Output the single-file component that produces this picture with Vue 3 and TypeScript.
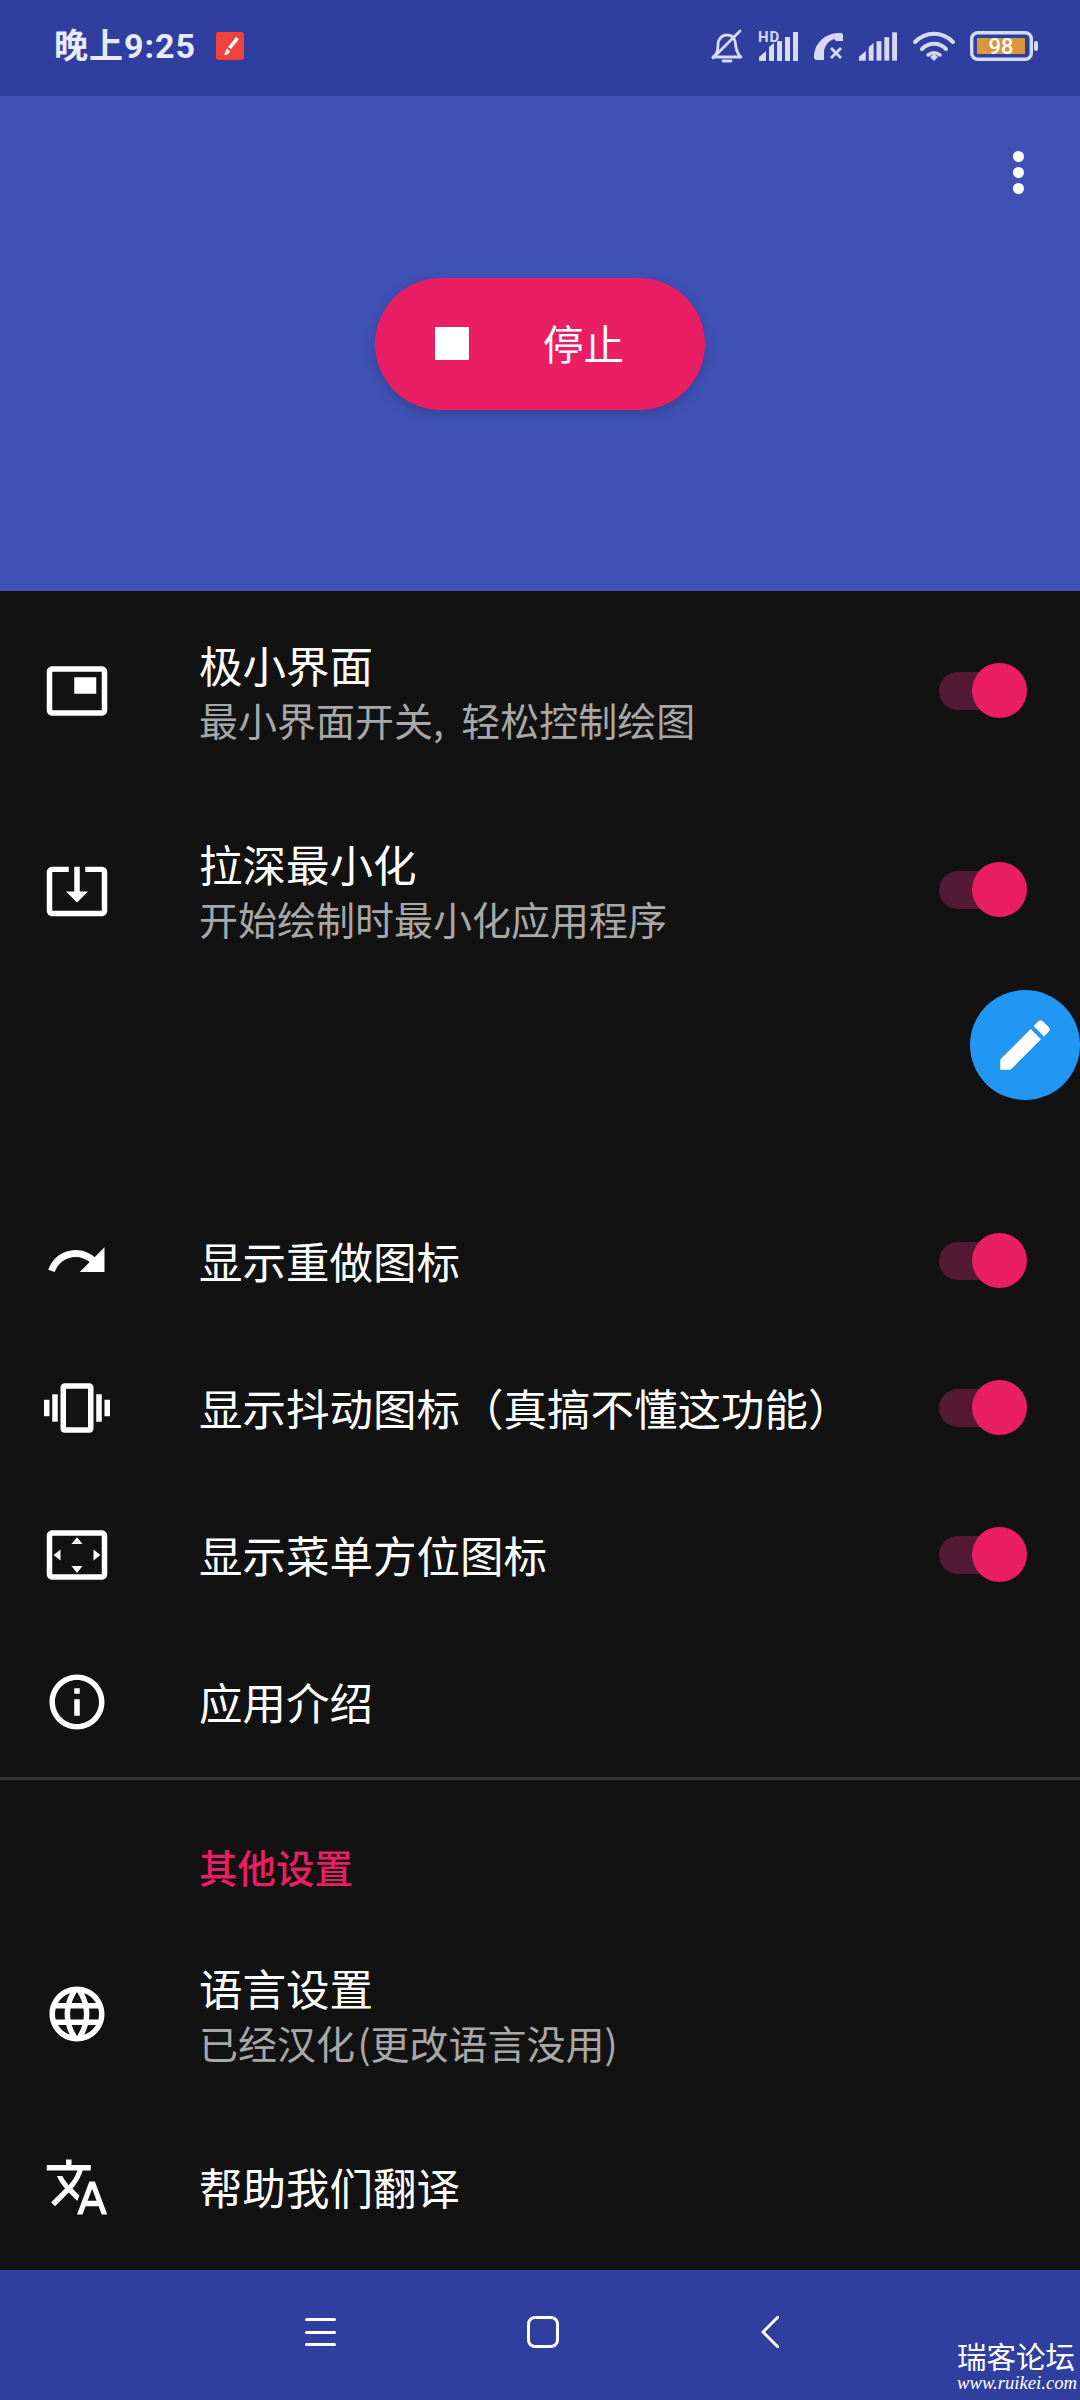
<script setup lang="ts">
type Row = {
  icon: string;
  title: string;
  sub?: string;
  toggle?: boolean;
};

const icons = {
  pip: 'M19 7h-8v6h8V7zm2-4H3c-1.1 0-2 .9-2 2v14c0 1.1.9 2 2 2h18c1.1 0 2-.9 2-2V5c0-1.1-.9-2-2-2zm0 16.01H3V4.98h18v14.03z',
  minimize: 'M12 16.5l4-4h-3v-9h-2v9H8l4 4zm9-13h-6v1.99h6v14.03H3V5.49h6V3.5H3c-1.1 0-2 .9-2 2v14c0 1.1.9 2 2 2h18c1.1 0 2-.9 2-2v-14c0-1.1-.9-2-2-2z',
  redo: 'M18.4 10.6C16.55 8.99 14.15 8 11.5 8c-4.65 0-8.58 3.03-9.96 7.22L3.9 16c1.05-3.19 4.05-5.5 7.6-5.5 1.95 0 3.73.72 5.12 1.88L13 16h9V7l-3.6 3.6z',
  vibrate: 'M0 15h2V9H0v6zm3 2h2V7H3v10zm19-8v6h2V9h-2zm-3 8h2V7h-2v10zM16.5 3h-9C6.67 3 6 3.67 6 4.5v15c0 .83.67 1.5 1.5 1.5h9c.83 0 1.5-.67 1.5-1.5v-15c0-.83-.67-1.5-1.5-1.5zM16 19H8V5h8v14z',
  overscan: 'M12.01 5.5L10 8h4l-1.99-2.5zM18 10v4l2.5-1.99L18 10zM6 10l-2.5 2.01L6 14v-4zm8 6h-4l2.01 2.5L14 16zm7-13H3c-1.1 0-2 .9-2 2v14c0 1.1.9 2 2 2h18c1.1 0 2-.9 2-2V5c0-1.1-.9-2-2-2zm0 16.01H3V4.99h18v14.02z',
  info: 'M11 17h2v-6h-2v6zm1-15C6.48 2 2 6.48 2 12s4.48 10 10 10 10-4.48 10-10S17.52 2 12 2zm0 18c-4.41 0-8-3.59-8-8s3.59-8 8-8 8 3.59 8 8-3.59 8-8 8zM11 9h2V7h-2v2z',
  language: 'M11.99 2C6.47 2 2 6.48 2 12s4.47 10 9.99 10C17.52 22 22 17.52 22 12S17.52 2 11.99 2zm6.93 6h-2.95c-.32-1.25-.78-2.45-1.38-3.56 1.84.63 3.37 1.91 4.33 3.56zM12 4.04c.83 1.2 1.48 2.53 1.91 3.96h-3.82c.43-1.43 1.08-2.76 1.91-3.96zM4.26 14C4.1 13.36 4 12.69 4 12s.1-1.36.26-2h3.38c-.08.66-.14 1.32-.14 2 0 .68.06 1.34.14 2H4.26zm.82 2h2.95c.32 1.25.78 2.45 1.38 3.56-1.84-.63-3.37-1.9-4.33-3.56zm2.95-8H5.08c.96-1.66 2.49-2.93 4.33-3.56C8.81 5.55 8.35 6.75 8.03 8zM12 19.96c-.83-1.2-1.48-2.53-1.91-3.96h3.82c-.43 1.43-1.08 2.76-1.91 3.96zM14.34 14H9.66c-.09-.66-.16-1.32-.16-2 0-.68.07-1.35.16-2h4.68c.09.65.16 1.32.16 2 0 .68-.07 1.34-.16 2zm.25 5.56c.6-1.11 1.06-2.31 1.38-3.56h2.95c-.96 1.65-2.49 2.93-4.33 3.56zM16.36 14c.08-.66.14-1.32.14-2 0-.68-.06-1.34-.14-2h3.38c.16.64.26 1.31.26 2s-.1 1.36-.26 2h-3.38z',
  translate: 'M12.87 15.07l-2.54-2.51.03-.03c1.74-1.94 2.98-4.17 3.71-6.53H17V4h-7V2H8v2H1v1.99h11.17C11.5 7.92 10.44 9.75 9 11.35 8.07 10.32 7.3 9.19 6.69 8h-2c.73 1.63 1.73 3.17 2.98 4.56l-5.09 5.02L4 19l5-5 3.11 3.11.76-2.04zM18.5 10h-2L12 22h2l1.12-3h4.75L21 22h2l-4.5-12zm-2.62 7l1.62-4.33L19.12 17h-3.24z',
};

const topRows: Row[] = [
  { icon: icons.pip, title: '极小界面', sub: '最小界面开关,\u00a0\u00a0轻松控制绘图', toggle: true },
  { icon: icons.minimize, title: '拉深最小化', sub: '开始绘制时最小化应用程序', toggle: true },
];

const midRows: Row[] = [
  { icon: icons.redo, title: '显示重做图标', toggle: true },
  { icon: icons.vibrate, title: '显示抖动图标（真搞不懂这功能）', toggle: true },
  { icon: icons.overscan, title: '显示菜单方位图标', toggle: true },
  { icon: icons.info, title: '应用介绍' },
];

const otherRows: Row[] = [
  { icon: icons.language, title: '语言设置', sub: '已经汉化\u200a(更改语言没用)' },
  { icon: icons.translate, title: '帮助我们翻译' },
];

const signalBars = [
  'M1 29v-4l7-6v10z',
  'M11 29V15l5-4v18z',
  'M19 29V9h5v20z',
  'M27 29V5h5v24z',
  'M35 29V0h5v29z',
];
</script>

<template>
  <div class="page">
    <header class="status">
      <span class="status__time">晚上9:25</span>
      <svg class="status__app" width="28" height="28" viewBox="0 0 28 28">
        <rect width="28" height="28" rx="2" fill="#f2403c" />
        <path d="M20 5l3 2-8 10-3-2z" fill="#fff" />
        <path d="M11 16.500l3 2.500c-1 3-3 4-6 4 1-1.500 1-4 3-6.500z" fill="#fff" />
      </svg>
      <div class="status__icons">
        <svg width="32" height="33" viewBox="0 0 32 33" fill="none" stroke="#d5daf5" stroke-width="2.800">
          <path d="M2 27c4-2 5-6 5-12 0-6 4-10 9-10 4 0 7 2 8 6 1 6 1 12 6 16z" stroke-linejoin="round" />
          <path d="M2 28L29 1" stroke-linecap="round" />
          <path d="M12 31h8" stroke-width="2.800" stroke-linecap="round" />
        </svg>
        <svg width="41" height="29" viewBox="0 0 41 29" fill="#d5daf5">
          <path v-for="bar in signalBars" :key="bar" :d="bar" />
          <text class="status__hd" x="0" y="10">HD</text>
        </svg>
        <svg width="29" height="27" viewBox="0 0 29 27" fill="#d5daf5">
          <path d="M29 2v6h-7l-2-2c-6 2-9 7-10 12v9H3c-2 0-3-1-3-3C0 12 9 1 24 0h3c1 0 2 1 2 2z" />
          <path d="M17 15l10 10M27 15L17 25" stroke="#d5daf5" stroke-width="2.800" fill="none" />
        </svg>
        <svg width="40" height="29" viewBox="0 0 41 29" fill="#d5daf5">
          <path v-for="bar in signalBars" :key="bar" :d="bar" />
        </svg>
        <svg width="42" height="30" viewBox="0 0 42 30" fill="none" stroke="#d5daf5" stroke-width="4" stroke-linecap="round">
          <path d="M2 11C13 0 29 0 40 11" />
          <path d="M9 18c7-7 17-7 24 0" />
          <path d="M15 24c4-3 8-3 12 0" stroke-width="3.500" />
          <path d="M21 30l-4-4 4-3 4 3z" fill="#d5daf5" stroke="none" />
        </svg>
        <svg width="68" height="30" viewBox="0 0 68 30">
          <rect x="1.700" y="1.700" width="59.600" height="26.600" rx="6" fill="none" stroke="#d5daf5" stroke-width="3.400" />
          <rect x="7" y="7" width="48" height="16" fill="#d9963a" />
          <rect x="64" y="10" width="4" height="10" rx="2" fill="#d5daf5" />
          <text class="status__battery" x="31" y="23" text-anchor="middle">98</text>
        </svg>
      </div>
    </header>

    <section class="hero">
      <div class="hero__menu">
        <i></i>
        <i></i>
        <i></i>
      </div>
      <button class="hero__stop" type="button">
        <span class="hero__square"></span>
        <span class="hero__label">停止</span>
      </button>
    </section>

    <main class="list">
      <div v-for="row in topRows" :key="row.title" class="row row--double">
        <svg class="row__icon" viewBox="0 0 24 24"><path :d="row.icon" /></svg>
        <div class="row__text">
          <div class="row__title">{{ row.title }}</div>
          <div class="row__sub">{{ row.sub }}</div>
        </div>
        <span v-if="row.toggle" class="switch"><span class="switch__thumb"></span></span>
      </div>

      <div class="list__gap"></div>

      <div v-for="row in midRows" :key="row.title" class="row">
        <svg class="row__icon" viewBox="0 0 24 24"><path :d="row.icon" /></svg>
        <div class="row__text">
          <div class="row__title">{{ row.title }}</div>
        </div>
        <span v-if="row.toggle" class="switch"><span class="switch__thumb"></span></span>
      </div>

      <div class="list__divider"></div>
      <div class="list__category">其他设置</div>

      <div
        v-for="row in otherRows"
        :key="row.title"
        class="row"
        :class="{ 'row--double': row.sub }"
      >
        <svg class="row__icon" viewBox="0 0 24 24"><path :d="row.icon" /></svg>
        <div class="row__text">
          <div class="row__title">{{ row.title }}</div>
          <div v-if="row.sub" class="row__sub">{{ row.sub }}</div>
        </div>
      </div>

      <button class="fab" type="button">
        <svg viewBox="0 0 24 24">
          <path d="M3 17.250V21h3.750L17.810 9.940l-3.750-3.750L3 17.250zM20.710 7.040c.39-.39.39-1.020 0-1.410l-2.340-2.340c-.39-.39-1.020-.39-1.410 0l-1.830 1.830 3.750 3.750 1.830-1.830z" />
        </svg>
      </button>
    </main>

    <footer class="nav">
      <div class="nav__menu">
        <i></i>
        <i></i>
        <i></i>
      </div>
      <span class="nav__home"></span>
      <svg class="nav__back" width="18" height="32" viewBox="0 0 18 32" fill="none">
        <path d="M17 1L2 16l15 15" stroke="#fff" stroke-width="3" stroke-linecap="round" stroke-linejoin="round" />
      </svg>
      <div class="nav__mark">
        <div class="nav__mark-name">瑞客论坛</div>
        <div class="nav__mark-url">www.ruikei.com</div>
      </div>
    </footer>
  </div>
</template>

<style scoped>
.page {
  display: flex;
  flex-direction: column;
  width: 1080px;
  height: 2400px;
  overflow: hidden;
  background: #121212;
  color: #fff;
  font-family: "Noto Sans CJK SC", "Noto Sans", sans-serif;
}

.status {
  display: flex;
  flex: none;
  align-items: center;
  height: 96px;
  padding: 0 42px 4px 54px;
  box-sizing: border-box;
  background: #303f9f;
}

.status__time {
  color: #e8ebfa;
  font-family: Roboto, "Noto Sans CJK SC", sans-serif;
  font-size: 34px;
  font-weight: 700;
  letter-spacing: 1px;
  line-height: 1.2;
}

.status__app {
  margin-left: 20px;
}

.status__icons {
  display: flex;
  align-items: center;
  gap: 15px;
  margin-left: auto;
}

.status__icons svg {
  overflow: visible;
}

.status__hd {
  fill: #d5daf5;
  font-family: Roboto, sans-serif;
  font-size: 15px;
  font-weight: 700;
  letter-spacing: 1px;
}

.status__battery {
  fill: #fff;
  font-family: Roboto, sans-serif;
  font-size: 22px;
  font-weight: 500;
}

.hero {
  position: relative;
  display: flex;
  flex: none;
  align-items: center;
  justify-content: center;
  height: 495px;
  background: #3f51b5;
}

.hero__menu {
  position: absolute;
  top: 55px;
  right: 56px;
  display: flex;
  flex-direction: column;
  gap: 5px;
}

.hero__menu i {
  display: block;
  width: 11px;
  height: 11px;
  border-radius: 50%;
  background: #fff;
}

.hero__stop {
  display: flex;
  align-items: center;
  width: 330px;
  height: 132px;
  padding: 0 0 0 60px;
  box-sizing: border-box;
  border: 0;
  border-radius: 66px;
  background: #e91e63;
  box-shadow: 0 4px 12px rgba(0, 0, 0, 0.18);
  color: #fff;
  font: inherit;
}

.hero__square {
  width: 34px;
  height: 33px;
  background: #fff;
}

.hero__label {
  margin-left: 74px;
  font-size: 40.500px;
  line-height: 1;
}

.list {
  position: relative;
  display: flex;
  flex: 1;
  flex-direction: column;
}

.list__gap {
  height: 198px;
}

.list__divider {
  height: 3px;
  margin-top: 2px;
  background: #333;
}

.list__category {
  height: 134px;
  padding-left: 199px;
  box-sizing: border-box;
  color: #e91e63;
  font-size: 38.500px;
  font-weight: 500;
  line-height: 172px;
}

.row {
  display: flex;
  align-items: center;
  height: 147px;
  padding-left: 44px;
  box-sizing: border-box;
}

.row--double {
  height: 199px;
}

.row--double .row__text {
  padding-bottom: 1px;
}

.row__icon {
  flex: none;
  width: 66px;
  height: 66px;
  fill: #fff;
}

.row__text {
  flex: 1;
  min-width: 0;
  margin-left: 89px;
}

.row__title {
  font-size: 43.500px;
  line-height: 54px;
  white-space: nowrap;
}

.row__sub {
  margin-top: 4px;
  color: #a8a8a8;
  font-size: 39px;
  line-height: 46px;
  white-space: nowrap;
}

.switch {
  position: relative;
  flex: none;
  width: 76px;
  height: 38px;
  margin-right: 65px;
  border-radius: 19px;
  background: #551a33;
}

.switch__thumb {
  position: absolute;
  top: -8.500px;
  right: -12px;
  width: 55px;
  height: 55px;
  border-radius: 50%;
  background: #e91e63;
}

.fab {
  position: absolute;
  top: 399px;
  right: 0;
  display: grid;
  place-items: center;
  width: 110px;
  height: 110px;
  padding: 0;
  border: 0;
  border-radius: 50%;
  background: #2196f3;
}

.fab svg {
  width: 66px;
  height: 66px;
  fill: #fff;
}

.nav {
  position: relative;
  display: flex;
  flex: none;
  align-items: center;
  height: 130px;
  padding: 0 0 6px 305px;
  box-sizing: border-box;
  background: #303f9f;
}

.nav__menu {
  display: flex;
  flex-direction: column;
  gap: 9.500px;
  width: 31px;
}

.nav__menu i {
  display: block;
  height: 3px;
  border-radius: 2px;
  background: #fff;
}

.nav__home {
  width: 32px;
  height: 32px;
  margin-left: 191px;
  box-sizing: border-box;
  border: 3px solid #fff;
  border-radius: 8px;
}

.nav__back {
  margin-left: 202px;
}

.nav__mark {
  position: absolute;
  right: 5px;
  bottom: 7px;
  width: 118px;
  color: #fff;
  font-family: "Liberation Serif", "Noto Sans CJK SC", serif;
  line-height: 1;
}

.nav__mark-name {
  font-size: 29.500px;
  white-space: nowrap;
}

.nav__mark-url {
  margin-top: 1px;
  font-size: 18.700px;
  font-style: italic;
  white-space: nowrap;
}
</style>

<style>
html,
body {
  background: #121212;
}
</style>
